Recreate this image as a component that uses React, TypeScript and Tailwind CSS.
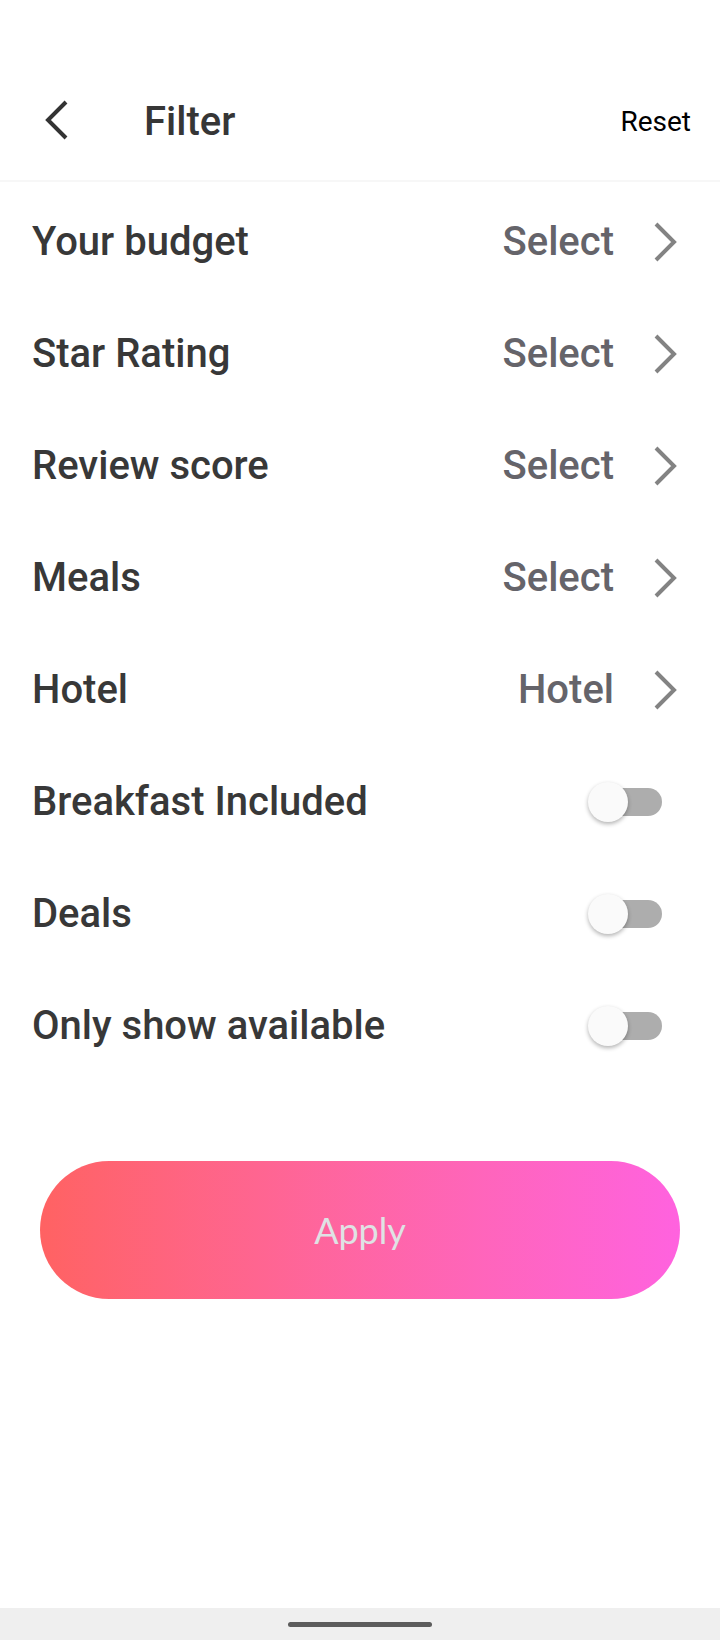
import React from 'react';

const rows = [
  { label: 'Your budget', value: 'Select' },
  { label: 'Star Rating', value: 'Select' },
  { label: 'Review score', value: 'Select' },
  { label: 'Meals', value: 'Select' },
  { label: 'Hotel', value: 'Hotel' },
];

const toggles = ['Breakfast Included', 'Deals', 'Only show available'];

function Chevron() {
  return (
    <svg width="26" height="40" viewBox="0 0 26 40" fill="none">
      <polyline points="4,2 22,20 4,38" stroke="#838383" strokeWidth="4" />
    </svg>
  );
}

function Toggle() {
  return (
    <div className="relative w-[74px] h-[40px] flex items-center">
      <div className="absolute right-0 w-[68px] h-[28px] rounded-full bg-[#adadad]" />
      <div className="absolute left-0 w-[40px] h-[40px] rounded-full bg-[#fafafa] shadow-[0_2px_4px_rgba(0,0,0,0.3)]" />
    </div>
  );
}

export default function App() {
  return (
    <div className="h-[1640px] w-[720px] bg-white flex flex-col" style={{ fontFamily: 'Roboto, sans-serif' }}>
      <div className="pt-[60px] border-b-2 border-[#f7f7f7]">
        <div className="h-[120px] flex items-center">
          <div className="pl-[43px] w-[144px]">
            <svg width="26" height="40" viewBox="0 0 26 40" fill="none">
              <polyline points="23,2 5,20 23,38" stroke="#333333" strokeWidth="4" />
            </svg>
          </div>
          <div className="pt-[4px] text-[40px] font-medium text-[#363636]">Filter</div>
          <div className="ml-auto pt-[4px] pr-[29px] text-[28px] text-black">Reset</div>
        </div>
      </div>
      <div className="pt-[4px]">
        {rows.map((r) => (
          <div key={r.label} className="h-[112px] flex items-center pl-[32px] pr-[42px]">
            <div className="text-[40px] font-medium text-[#383838]">{r.label}</div>
            <div className="ml-auto flex items-center gap-[38px]">
              <span className="text-[40px] font-medium text-[#65646a]">{r.value}</span>
              <Chevron />
            </div>
          </div>
        ))}
        {toggles.map((t) => (
          <div key={t} className="h-[112px] flex items-center pl-[32px] pr-[58px]">
            <div className="text-[40px] font-medium text-[#383838]">{t}</div>
            <div className="ml-auto">
              <Toggle />
            </div>
          </div>
        ))}
      </div>
      <div className="mt-[79px] mx-[40px] h-[138px] rounded-full bg-gradient-to-r from-[#ff6262] to-[#ff62df] flex items-center justify-center">
        <span className="text-[36px] text-[#dfe2e4]" style={{ fontFamily: 'Lato, sans-serif' }}>Apply</span>
      </div>
      <div className="mt-auto h-[32px] bg-[#efefef] flex items-center justify-center">
        <div className="w-[144px] h-[5px] rounded-full bg-[#5c5c5c]" />
      </div>
    </div>
  );
}
